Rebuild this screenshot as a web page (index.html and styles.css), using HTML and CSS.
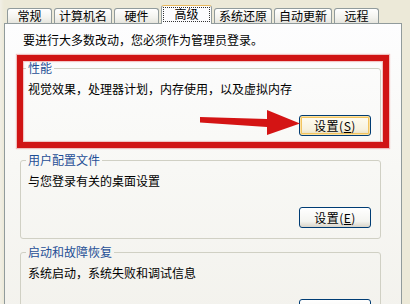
FILE: index.html
```html
<!DOCTYPE html>
<html lang="zh-CN">
<head>
<meta charset="utf-8">
<title>系统属性 - 高级</title>
<link rel="stylesheet" href="styles.css">
</head>
<body>
<div class="window">
  <div class="tabs">
    <div class="tab">常规</div>
    <div class="tab">计算机名</div>
    <div class="tab">硬件</div>
    <div class="tab active"><span class="focus">高级</span></div>
    <div class="tab">系统还原</div>
    <div class="tab">自动更新</div>
    <div class="tab">远程</div>
  </div>
  <div class="panel">
    <p class="intro">要进行大多数改动，您必须作为管理员登录。</p>
    <fieldset class="group first">
      <legend>性能</legend>
      <p class="desc">视觉效果，处理器计划，内存使用，以及虚拟内存</p>
      <div class="actions"><button class="btn focused">设置(<u>S</u>)</button></div>
    </fieldset>
    <fieldset class="group">
      <legend>用户配置文件</legend>
      <p class="desc">与您登录有关的桌面设置</p>
      <div class="actions"><button class="btn">设置(<u>E</u>)</button></div>
    </fieldset>
    <fieldset class="group">
      <legend>启动和故障恢复</legend>
      <p class="desc">系统启动，系统失败和调试信息</p>
      <div class="actions"><button class="btn">设置(<u>T</u>)</button></div>
    </fieldset>
  </div>
  <div class="highlight"></div>
  <svg class="arrow" width="410" height="304" viewBox="0 0 410 304">
    <polygon points="200,117 267,119 267,110 300,123.5 267,135 267,127 200,122.5" fill="#d41414"/>
  </svg>
</div>
</body>
</html>
```

FILE: styles.css
```css
* { box-sizing: border-box; }

html, body {
  margin: 0;
  padding: 0;
  background: #ece9d8;
}

body {
  font-family: "Noto Sans CJK SC", "Noto Sans", sans-serif;
  font-size: 12px;
  line-height: 14px;
  color: #000;
}

.window {
  position: relative;
  width: 410px;
  height: 304px;
  overflow: hidden;
  padding-left: 4px;
  background: linear-gradient(90deg, #f1efe6 0, #ece9d8 4px, #ece9d8 100%);
}

.tabs {
  display: flex;
  align-items: flex-end;
  gap: 2px;
  height: 23px;
  padding-top: 5px;
  padding-left: 3px;
}

.tab {
  min-width: 45px;
  height: 15px;
  padding: 0 4px;
  border: 1px solid #919b9c;
  border-bottom: none;
  border-radius: 3px 3px 0 0;
  background: linear-gradient(#ffffff, #f3f3ef 60%, #e6e5de);
  text-align: center;
  white-space: nowrap;
  line-height: 14px;
}

.tab.active {
  position: relative;
  z-index: 2;
  min-width: 51px;
  height: 19px;
  margin-bottom: -1px;
  padding: 1px 1px 0;
  border-top: 1px solid #e7b65a;
  background: #fcfcfe;
}

.tab.active .focus {
  display: block;
  height: 15px;
  line-height: 12px;
  border: 1px dotted #333;
}

.panel {
  position: relative;
  width: 398px;
  height: 290px;
  border: 1px solid #919b9c;
  background: linear-gradient(#fdfdfe, #f8f8f5 50%, #f3f2ed);
  padding: 9px 0 0 15px;
}

.intro {
  margin: 0;
  padding-left: 3px;
}

.group {
  width: 361px;
  margin: 6px 0 0 0;
  padding: 0 9px 10px 5px;
  border: 1px solid #d0d0c4;
  border-radius: 3px;
  min-inline-size: 0;
}

.group.first {
  margin-top: 14px;
}

.group legend {
  padding: 0 2px;
  line-height: 14px;
  color: #1f4f96;
}

.desc {
  margin: 7px 0 0 2px;
}

.actions {
  display: flex;
  justify-content: flex-end;
  margin-top: 19px;
}

.btn {
  width: 72px;
  height: 21px;
  padding: 0;
  border: 1px solid #003c74;
  border-radius: 3px;
  background: linear-gradient(#ffffff, #f4f4f0 70%, #d9d4c8);
  font-family: inherit;
  font-size: 12px;
  line-height: 14px;
  color: #000;
  letter-spacing: 0.5px;
}

.btn u {
  text-decoration: underline;
}

.btn.focused {
  background: linear-gradient(#fffdf2, #f7f2df 70%, #e6dcbd);
  box-shadow: inset 0 0 0 1px #fbe2a4, inset 0 0 0 2px #f2c45f;
}

.highlight {
  position: absolute;
  left: 17px;
  top: 55px;
  width: 372px;
  height: 93px;
  border: 6px solid #d01414;
  box-shadow: 0 0 1px 1px rgba(220, 80, 80, 0.35), inset 0 0 1px 1px rgba(220, 80, 80, 0.35);
  pointer-events: none;
}

.arrow {
  position: absolute;
  left: 0;
  top: 0;
  pointer-events: none;
}
```
